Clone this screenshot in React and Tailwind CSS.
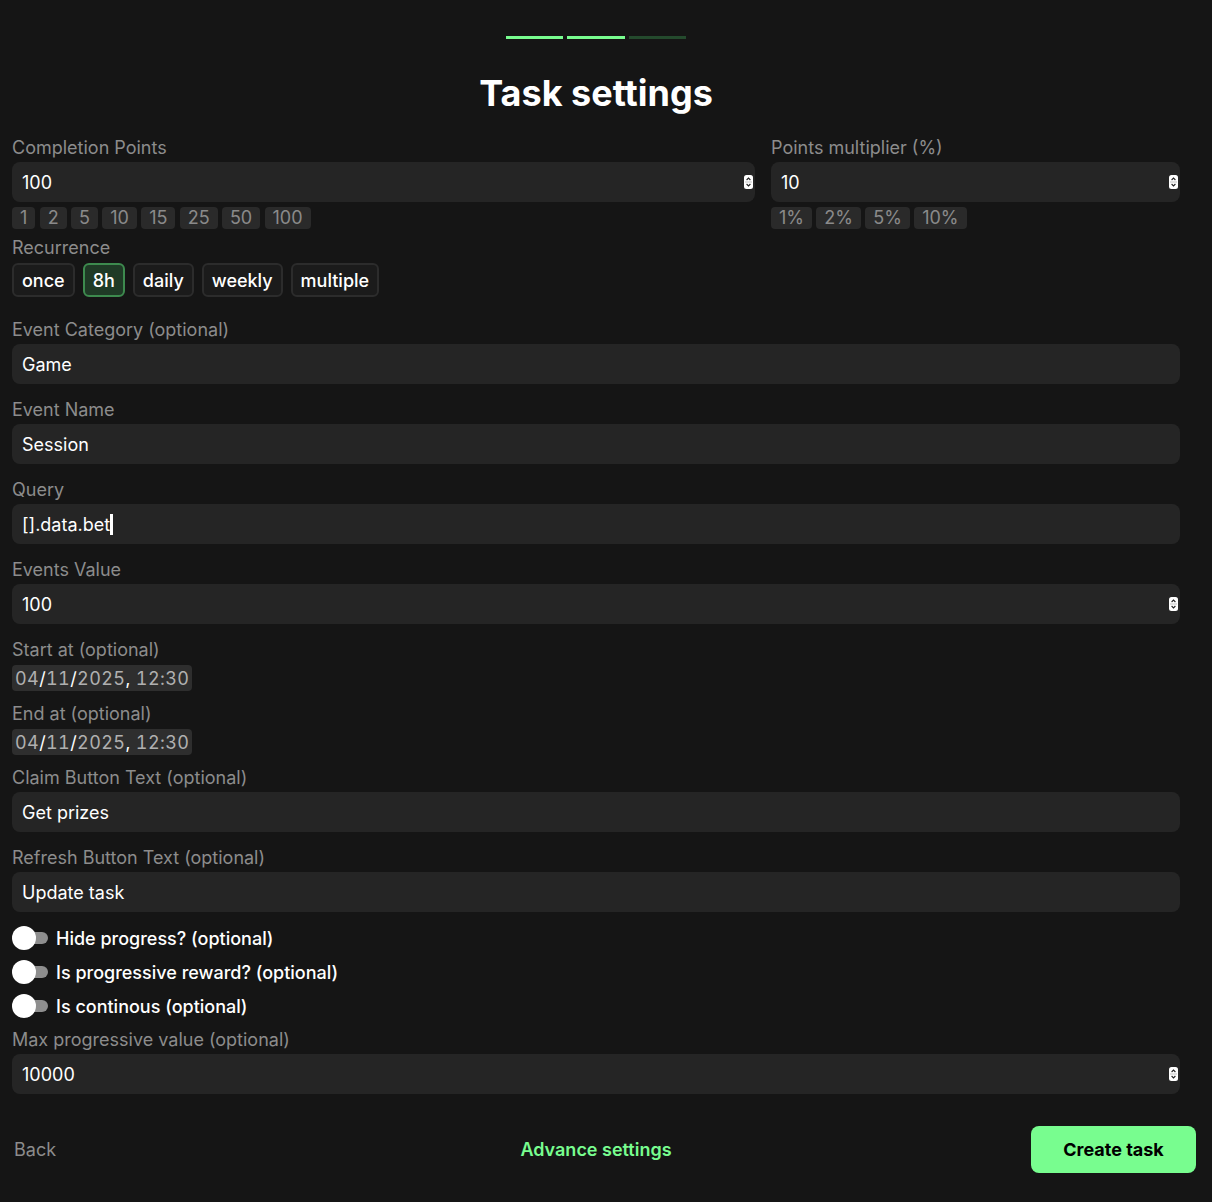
import React from "react";

const F = { fontFamily: "Inter, 'Noto Sans', sans-serif" };

function Spinner() {
  return (
    <svg width="9" height="14" viewBox="0 0 9 14" className="shrink-0">
      <rect x="0" y="0" width="9" height="14" rx="2.5" fill="#ffffff" />
      <line x1="1" y1="7" x2="8" y2="7" stroke="#9a9a9a" strokeWidth="0.6" />
      <path d="M2.6 5 L4.5 3.1 L6.4 5" fill="none" stroke="#222" strokeWidth="1.1" />
      <path d="M2.6 9 L4.5 10.9 L6.4 9" fill="none" stroke="#222" strokeWidth="1.1" />
    </svg>
  );
}

function Label({ children, className = "" }) {
  return <div className={"h-6 leading-[26px] text-[18px] text-[#8c8c8c] " + className}>{children}</div>;
}

function Input({ value, number, cursor, className = "" }) {
  return (
    <div className={"h-10 rounded-lg bg-[#252525] flex items-center pl-[10px] pr-[2px] text-[18px] text-white " + className}>
      <span className="flex-1 flex items-center">
        {value}
        {cursor && <span className="inline-block w-[3px] h-[21px] bg-white" />}
      </span>
      {number && <Spinner />}
    </div>
  );
}

function Chip({ children }) {
  return (
    <div className="h-[22px] leading-[22px] px-2 rounded bg-[#2a2a2a] text-[18px] text-[#8a8a8a]">{children}</div>
  );
}

function DateField() {
  return (
    <div className="inline-flex h-[26px] items-center rounded bg-[#2e2e2e] px-[3px] text-[18px] tabular-nums tracking-[0.4px] text-[#b0b0b0]">
      <span>04</span><span className="text-white">/</span><span>11</span><span className="text-white">/</span><span>2025</span><span className="text-white">,</span><span>&nbsp;12</span><span>:</span><span>30</span>
    </div>
  );
}

function Toggle({ label }) {
  return (
    <div className="h-[34px] flex items-center">
      <div className="relative w-[36px] h-[24px]">
        <div className="absolute left-[12px] top-[6px] w-[24px] h-[12px] rounded-full bg-[#8e8e8e]" />
        <div className="absolute left-0 top-0 w-[24px] h-[24px] rounded-full bg-white" />
      </div>
      <span className="ml-[8px] text-[18px] text-white font-medium">{label}</span>
    </div>
  );
}

export default function App() {
  const rec = ["once", "8h", "daily", "weekly", "multiple"];
  return (
    <div style={F} className="w-[1212px] min-h-[1202px] bg-[#151515] overflow-hidden">
      <div className="w-[1192px] flex flex-col items-center">
        <div className="mt-[36px] flex gap-[4px]">
          <div className="w-[57px] h-[3px] bg-[#78fd8f]" />
          <div className="w-[58px] h-[3px] bg-[#78fd8f]" />
          <div className="w-[57px] h-[3px] bg-[#244a2d]" />
        </div>
        <h1 className="mt-[34px] h-10 leading-10 text-[36px] font-bold text-white">Task settings</h1>
      </div>

      <div className="px-3 w-[1192px]">
        <div className="mt-[22px] flex gap-4">
          <div className="w-[743px]">
            <Label>Completion Points</Label>
            <Input className="mt-[3px]" value="100" number />
            <div className="mt-[5px] flex gap-[4.3px]">
              {["1", "2", "5", "10", "15", "25", "50", "100"].map((c) => (
                <Chip key={c}>{c}</Chip>
              ))}
            </div>
          </div>
          <div className="w-[409px]">
            <Label>Points multiplier (%)</Label>
            <Input className="mt-[3px]" value="10" number />
            <div className="mt-[5px] flex gap-[4.3px]">
              {["1%", "2%", "5%", "10%"].map((c) => (
                <Chip key={c}>{c}</Chip>
              ))}
            </div>
          </div>
        </div>

        <Label className="mt-[6px]">Recurrence</Label>
        <div className="mt-[4px] flex gap-[8px]">
          {rec.map((r) => (
            <div
              key={r}
              className={
                "h-[34px] flex items-center px-[8px] rounded-md border-2 text-[18px] font-medium text-white " +
                (r === "8h" ? "bg-[#1f3a26] border-[#3d8a4e]" : "bg-[#1b1b1b] border-[#2c2c2c]")
              }
            >
              {r}
            </div>
          ))}
        </div>

        <Label className="mt-[20px]">Event Category (optional)</Label>
        <Input className="mt-[3px]" value="Game" />

        <Label className="mt-[13px]">Event Name</Label>
        <Input className="mt-[3px]" value="Session" />

        <Label className="mt-[13px]">Query</Label>
        <Input className="mt-[3px]" value="[].data.bet" cursor />

        <Label className="mt-[13px]">Events Value</Label>
        <Input className="mt-[3px]" value="100" number />

        <Label className="mt-[13px]">Start at (optional)</Label>
        <div className="mt-[4px]"><DateField /></div>

        <Label className="mt-[10px]">End at (optional)</Label>
        <div className="mt-[4px]"><DateField /></div>

        <Label className="mt-[10px]">Claim Button Text (optional)</Label>
        <Input className="mt-[3px]" value="Get prizes" />

        <Label className="mt-[13px]">Refresh Button Text (optional)</Label>
        <Input className="mt-[3px]" value="Update task" />

        <div className="mt-[9px]">
          <Toggle label="Hide progress? (optional)" />
          <Toggle label="Is progressive reward? (optional)" />
          <Toggle label="Is continous (optional)" />
        </div>

        <Label className="mt-[4px]">Max progressive value (optional)</Label>
        <Input className="mt-[3px]" value="10000" number />
      </div>

      <div className="mt-[32px] w-[1192px] grid grid-cols-[1fr_auto_1fr] items-center">
        <div className="pl-[14px] text-[18px] text-[#8c8c8c]">Back</div>
        <div className="text-[18px] font-semibold text-[#78fd8f]">Advance settings</div>
        <div className="flex justify-end -mr-[4px]">
          <div className="h-[47px] w-[165px] rounded-lg bg-[#78fd8f] flex items-center justify-center text-[18px] font-bold text-black">
            Create task
          </div>
        </div>
      </div>
    </div>
  );
}
